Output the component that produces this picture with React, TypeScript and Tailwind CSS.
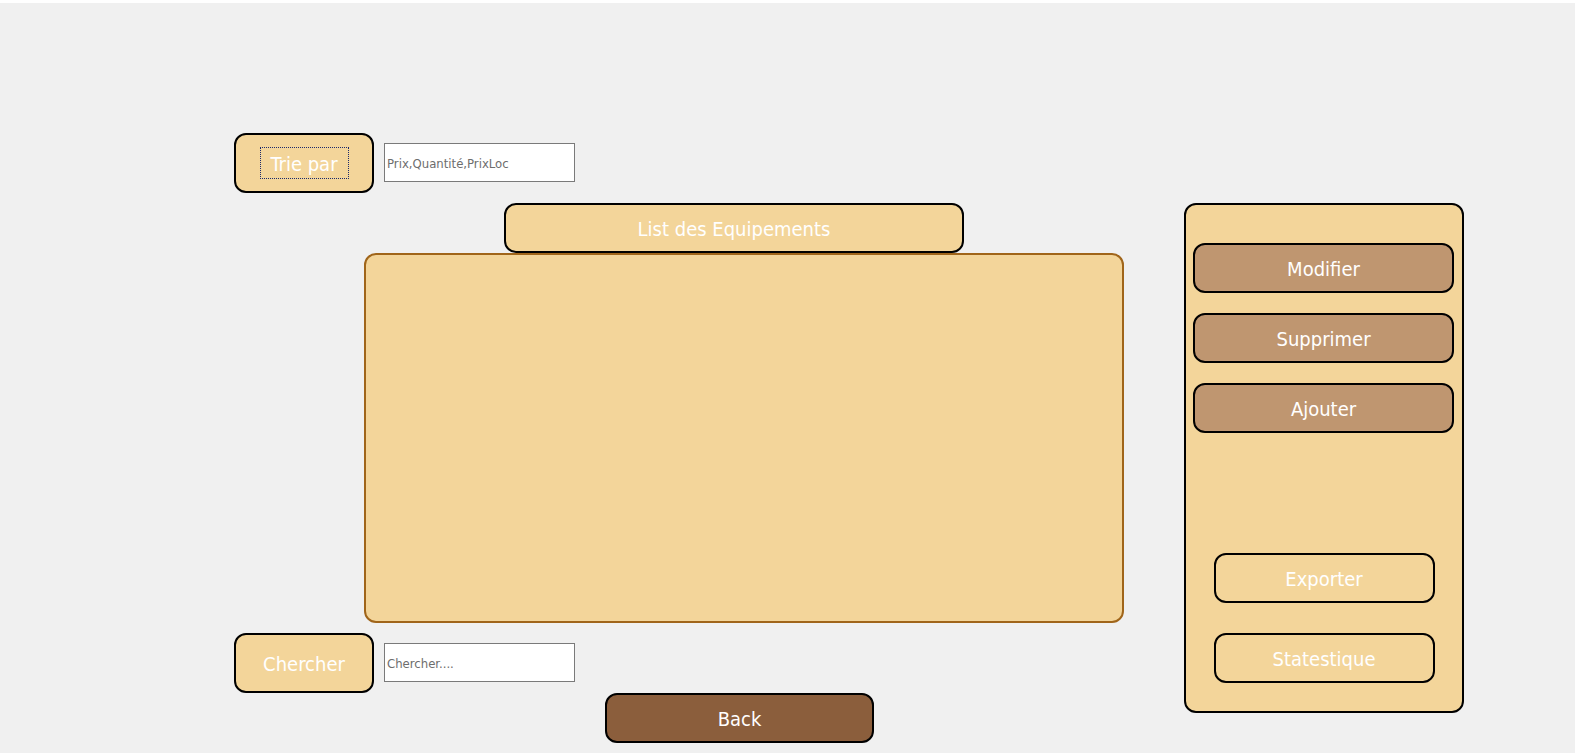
import React from "react";

const font = { fontFamily: '"DejaVu Sans Condensed", "DejaVu Sans", sans-serif' };

function SideBtn({ label }: { label: string }) {
  return (
    <button className="w-[261px] h-[50px] pt-[2px] rounded-[12px] border-2 border-black bg-[#bf9670] text-white text-[20px] leading-none">
      {label}
    </button>
  );
}

function OutlineBtn({ label }: { label: string }) {
  return (
    <button className="w-[221px] h-[50px] pt-[2px] rounded-[12px] border-2 border-black bg-[#f3d59a] text-white text-[20px] leading-none">
      {label}
    </button>
  );
}

export default function App() {
  return (
    <div
      className="w-[1575px] h-[753px] bg-[#f0f0f0] border-t-[3px] border-white overflow-hidden flex"
      style={font}
    >
      {/* left column */}
      <div className="flex flex-col pl-[234px] pt-[130px] w-[1124px] shrink-0">
        <div className="flex items-start gap-[10px]">
          <button className="w-[140px] h-[60px] rounded-[12px] border-2 border-black bg-[#f3d59a] flex items-center justify-center">
            <span className="w-[89px] h-[32px] pt-[2px] border border-dotted border-[#1b2a6b] flex items-center justify-center text-white text-[20px] leading-none">
              Trie par
            </span>
          </button>
          <input
            className="mt-[10px] w-[191px] h-[39px] pt-[2px] border border-[#7a7a7a] bg-white px-[2px] text-[13px] text-[#6d6d6d] placeholder:text-[#6d6d6d] outline-none"
            placeholder="Prix,Quantité,PrixLoc"
            style={font}
          />
        </div>
        <button className="mt-[10px] ml-[270px] w-[460px] h-[50px] pt-[2px] rounded-[12px] border-2 border-black bg-[#f3d59a] text-white text-[20px] leading-none">
          List des Equipements
        </button>
        <div className="ml-[130px] w-[760px] h-[370px] rounded-[12px] border-2 border-[#a0651a] bg-[#f3d59a]" />
        <div className="mt-[10px] flex items-start gap-[10px]">
          <button className="w-[140px] h-[60px] pt-[2px] rounded-[12px] border-2 border-black bg-[#f3d59a] text-white text-[20px] leading-none">
            Chercher
          </button>
          <input
            className="mt-[10px] w-[191px] h-[39px] pt-[2px] border border-[#7a7a7a] bg-white px-[2px] text-[13px] text-[#6d6d6d] placeholder:text-[#6d6d6d] outline-none"
            placeholder="Chercher...."
            style={font}
          />
        </div>
        <button className="ml-[371px] w-[269px] h-[50px] pt-[2px] rounded-[12px] border-2 border-black bg-[#8b5e3c] text-white text-[20px] leading-none">
          Back
        </button>
      </div>

      {/* right panel */}
      <div className="ml-[60px] mt-[200px] w-[280px] h-[510px] rounded-[12px] border-2 border-black bg-[#f3d59a] flex flex-col items-center">
        <div className="mt-[38px] flex flex-col gap-[20px] items-center pr-[1px]">
          <SideBtn label="Modifier" />
          <SideBtn label="Supprimer" />
          <SideBtn label="Ajouter" />
        </div>
        <div className="mt-[120px] flex flex-col gap-[30px] items-center">
          <OutlineBtn label="Exporter" />
          <OutlineBtn label="Statestique" />
        </div>
      </div>
    </div>
  );
}
